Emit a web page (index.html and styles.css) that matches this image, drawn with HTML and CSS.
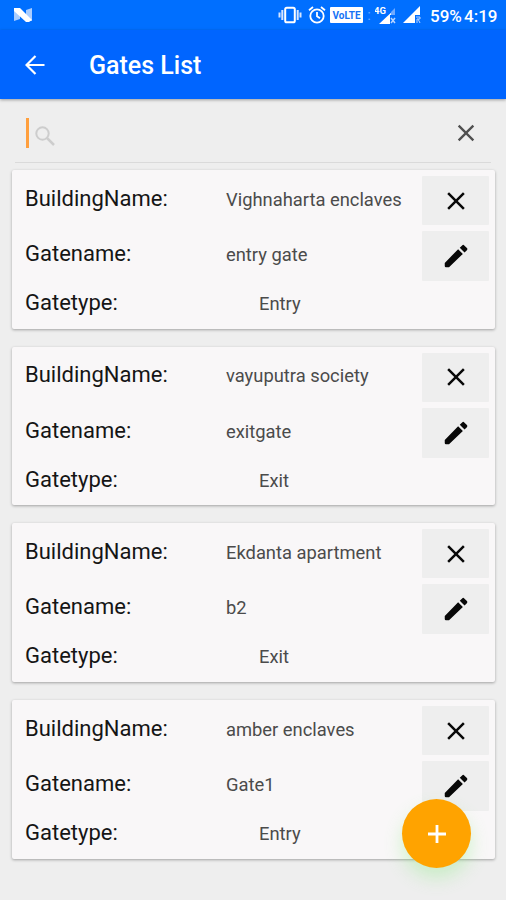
FILE: index.html
```
<!DOCTYPE html>
<html lang="en">
<head>
<meta charset="utf-8">
<title>Gates List</title>
<link rel="stylesheet" href="styles.css">
</head>
<body>
<svg class="defs" aria-hidden="true">
  <symbol id="close" viewBox="0 0 24 24"><path d="M19 6.41 17.59 5 12 10.59 6.41 5 5 6.41 10.59 12 5 17.59 6.41 19 12 13.41 17.59 19 19 17.59 13.41 12z"/></symbol>
  <symbol id="edit" viewBox="0 0 24 24"><path d="M3 17.600V20q0 1 1 1h2.400L17.500 10.300l-3.800-3.800L3 17.600zM20.710 7.300a1.200 1.200 0 0 0 0-1.700l-2.100-2.100a1.200 1.200 0 0 0-1.700 0l-1.900 1.900 3.800 3.800 1.900-1.900z"/></symbol>
</svg>
<header class="status">
  <svg class="logo" viewBox="0 0 20 16"><path d="M1 2v12l6-2V4zM19 1v13l-6-2V3z" fill="#a9cdff"/><path d="M1 1h6l12 12-3 2h-3L1 4z" fill="#fff"/></svg>
  <div class="indicators">
    <svg class="vibrate" viewBox="0 0 24 18"><rect x="7.200" y="1.700" width="9.600" height="14.600" rx="1.600" fill="none" stroke="#fff" stroke-width="2"/><path d="M4.300 4v10M19.700 4v10M1.500 6.500v5M22.500 6.500v5" stroke="#d5e5ff" stroke-width="2"/></svg>
    <svg class="alarm" viewBox="0 0 18 18"><g fill="none" stroke="#fff" stroke-width="1.800"><circle cx="9" cy="10" r="6.700"/><path d="M1 4.200 5 1M17 4.200 13 1M9 6v4.300l3 2"/></g></svg>
    <span class="volte">VoLTE</span>
    <span class="dots">:</span>
    <svg class="signal" viewBox="0 0 22 19"><path d="M4 18 20 3v6h-5v9z" fill="#fff"/><path d="M20 2v7h-4V6z" fill="#70aaff"/><path d="m16 12 4 5m0-5-4 5" stroke="#b9d5ff" stroke-width="1.500"/><text x="-1" y="8">4G</text></svg>
    <svg class="signal2" viewBox="0 0 18 18"><path d="M0 17 17 0v9h-5v8z" fill="#fff"/><path d="M13 11h4v2h-3v4m1-4 2 4" stroke="#b9d5ff" fill="none"/></svg>
    <span class="battery">59%</span><span class="time">4:19</span>
  </div>
</header>
<nav class="appbar">
  <svg class="back" viewBox="0 0 20 20"><path d="M19.500 10H2M10.500 1 1.500 10l9 9" fill="none" stroke="#fff" stroke-width="2.200"/></svg>
  <h1>Gates List</h1>
</nav>
<main>
  <div class="search">
    <span class="caret"></span>
    <svg class="glass" viewBox="0 0 20 20"><circle cx="7.500" cy="7.500" r="6.200" fill="none" stroke="#cdcdcd" stroke-width="2"/><path d="m12 12 7 7" stroke="#cdcdcd" stroke-width="2.500"/></svg>
    <svg class="clear"><use href="#close"/></svg>
  </div>
  <section class="list">
    <article class="card">
      <span class="label">BuildingName:</span><span class="value">Vighnaharta enclaves</span><button><svg><use href="#close"/></svg></button>
      <span class="label">Gatename:</span><span class="value">entry gate</span><button><svg class="pen"><use href="#edit"/></svg></button>
      <span class="label">Gatetype:</span><span class="value type">Entry</span>
    </article>
    <article class="card">
      <span class="label">BuildingName:</span><span class="value">vayuputra society</span><button><svg><use href="#close"/></svg></button>
      <span class="label">Gatename:</span><span class="value">exitgate</span><button><svg class="pen"><use href="#edit"/></svg></button>
      <span class="label">Gatetype:</span><span class="value type">Exit</span>
    </article>
    <article class="card">
      <span class="label">BuildingName:</span><span class="value">Ekdanta apartment</span><button><svg><use href="#close"/></svg></button>
      <span class="label">Gatename:</span><span class="value">b2</span><button><svg class="pen"><use href="#edit"/></svg></button>
      <span class="label">Gatetype:</span><span class="value type">Exit</span>
    </article>
    <article class="card">
      <span class="label">BuildingName:</span><span class="value">amber enclaves</span><button><svg><use href="#close"/></svg></button>
      <span class="label">Gatename:</span><span class="value">Gate1</span><button><svg class="pen"><use href="#edit"/></svg></button>
      <span class="label">Gatetype:</span><span class="value type">Entry</span>
    </article>
  </section>
</main>
<button class="fab"><svg viewBox="0 0 18 18"><path d="M9 0v18M0 9h18" stroke="#fff" stroke-width="2.800"/></svg></button>
</body>
</html>
```
FILE: styles.css
```
* { box-sizing: border-box; }
body {
  margin: 0;
  height: 900px;
  overflow: hidden;
  position: relative;
  background: #eee;
  font-family: Roboto, "Liberation Sans", sans-serif;
}
svg { display: block; flex: none; }
.defs { display: none; }
.status {
  height: 30px;
  padding: 0 8px 0 13px;
  display: flex;
  align-items: center;
  justify-content: space-between;
  background: #006fff;
  color: #fff;
}
.logo { width: 20px; height: 16px; }
.indicators { display: flex; align-items: center; }
.vibrate { width: 24px; height: 18px; }
.alarm { width: 18px; height: 18px; margin-left: 6px; }
.volte {
  width: 33px;
  height: 16px;
  margin-left: 4px;
  border-radius: 1px;
  background: #fff;
  color: #1672f5;
  font-size: 10px;
  font-weight: 700;
  line-height: 17px;
  text-align: center;
}
.dots { width: 12px; text-align: center; font-size: 15px; color: #65a7ff; }
.signal { width: 22px; height: 19px; }
.signal text { font-size: 9.500px; font-weight: 700; fill: #fff; }
.signal2 { width: 18px; height: 18px; margin-left: 6px; }
.battery, .time { font-size: 17px; font-weight: 500; line-height: 20px; padding-top: 1px; }
.battery { margin-left: 9px; width: 34px; }
.time { width: 34px; }
.appbar {
  height: 69px;
  padding-left: 25px;
  display: flex;
  align-items: center;
  background: #0065ff;
  color: #fff;
  box-shadow: 0 1px 3px rgba(0, 0, 0, .35);
}
.back { width: 20px; height: 20px; }
h1 { margin: 3px 0 0 44px; font-size: 25px; line-height: 30px; font-weight: 500; }
.search {
  height: 64px;
  margin: 0 15px;
  padding: 5px 16px 0 11px;
  display: flex;
  align-items: center;
  border-bottom: 1px solid #dadada;
}
.caret { width: 3px; height: 30px; background: #ff9f3d; }
.glass { width: 20px; height: 20px; margin: 6px 0 0 6px; }
.clear { width: 28px; height: 28px; margin: 0 -5px 0 auto; fill: #505050; }
.list { padding: 7px 11px 0 12px; display: grid; gap: 18.200px; }
.card {
  height: 158.500px;
  padding: 6px 6px 0 13px;
  display: grid;
  grid-template-columns: 201px 196px 67px;
  grid-template-rows: 49px 50px 36px;
  row-gap: 6px;
  align-items: center;
  align-content: start;
  background: #f9f7f8;
  border-radius: 2px;
  box-shadow: 0 1px 3px rgba(0, 0, 0, .32);
}
.label { font-size: 22px; line-height: 26px; color: #151515; margin-top: -4px; }
.value { font-size: 18.350px; line-height: 24px; color: #4b4b4b; white-space: nowrap; margin-top: -2px; }
.type { padding-left: 33px; }
button { border: 0; padding: 0; display: flex; align-items: center; justify-content: center; }
.card button { width: 67px; height: 100%; background: #eee; border-radius: 1px; }
.card button svg { width: 30px; height: 30px; fill: #080808; }
.card button .pen { width: 30px; height: 30px; }
.fab {
  position: absolute;
  left: 402px;
  top: 799px;
  width: 69px;
  height: 69px;
  border-radius: 50%;
  background: #ffa300;
  box-shadow: 0 10px 18px rgba(120, 235, 110, .3);
}
.fab svg { width: 18px; height: 18px; }
```
